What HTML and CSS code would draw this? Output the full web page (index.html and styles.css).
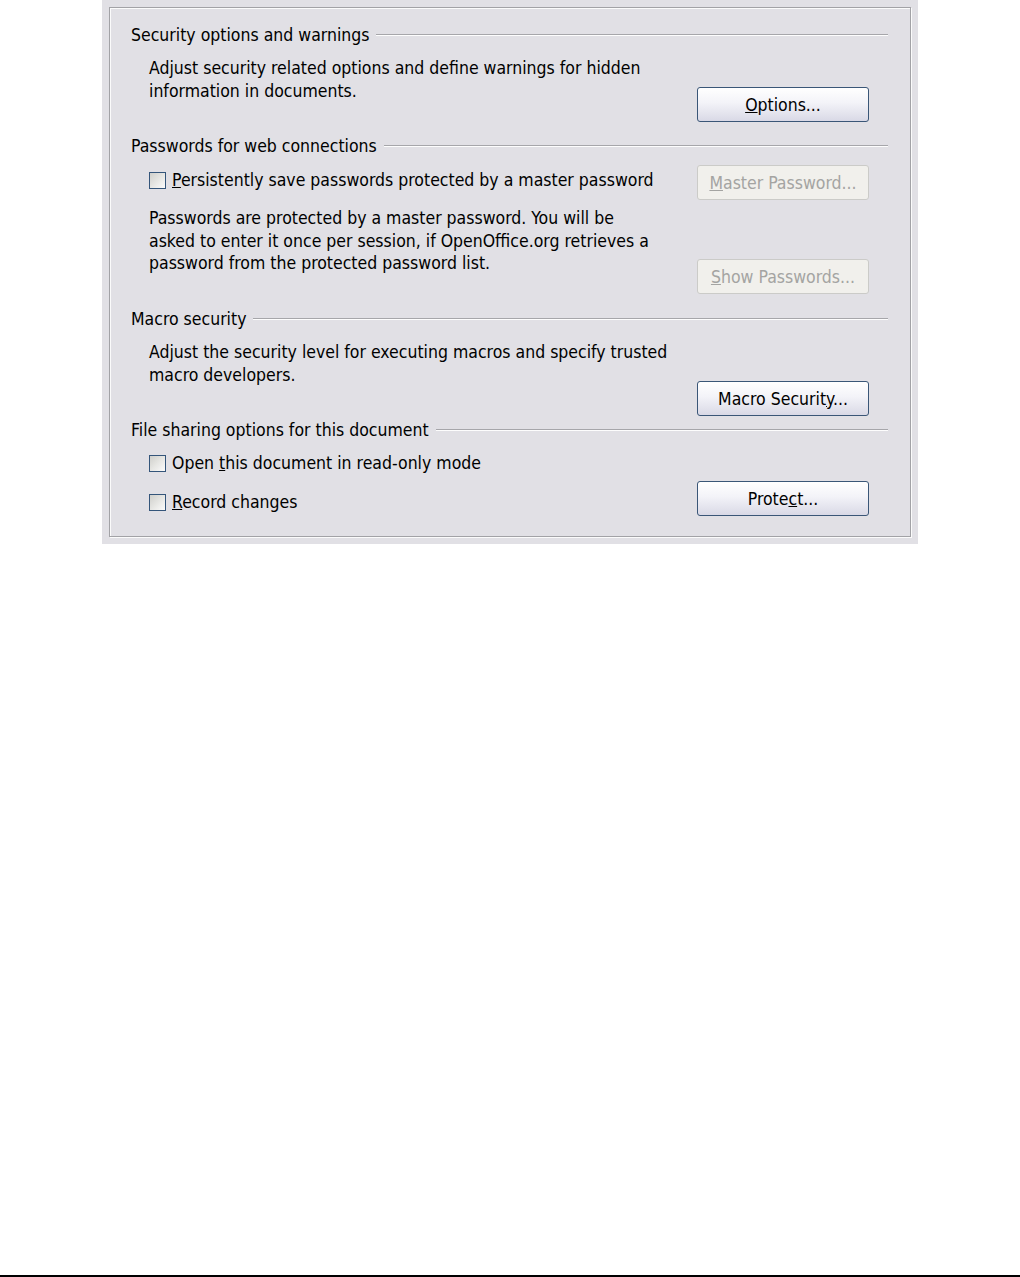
FILE: index.html
```html
<!DOCTYPE html>
<html lang="en">
<head>
  <meta charset="UTF-8">
  <meta name="viewport" content="width=device-width, initial-scale=1.0">
  <title>Security Options</title>
  <link rel="stylesheet" href="styles.css">
</head>
<body>
  <div class="panel">
    <div class="frame">

      <div class="group group-first">
        <div class="group-title"><span>Security options and warnings</span></div>
        <div class="group-body">
          <div class="group-text">
            <p class="note note-top">Adjust security related options and define warnings for hidden<br>information in documents.</p>
          </div>
          <div class="group-actions">
            <button class="btn btn-options"><u>O</u>ptions...</button>
          </div>
        </div>
      </div>

      <div class="group group-passwords">
        <div class="group-title"><span>Passwords for web connections</span></div>
        <div class="group-body">
          <div class="group-text">
            <label class="check check-first"><span class="box"></span><span><u>P</u>ersistently save passwords protected by a master password</span></label>
            <p class="note note-after-check">Passwords are protected by a master password. You will be<br>asked to enter it once per session, if OpenOffice.org retrieves a<br>password from the protected password list.</p>
          </div>
          <div class="group-actions">
            <button class="btn btn-disabled btn-master" disabled><u>M</u>aster Password...</button>
            <button class="btn btn-disabled btn-show" disabled><u>S</u>how Passwords...</button>
          </div>
        </div>
      </div>

      <div class="group group-macro">
        <div class="group-title"><span>Macro security</span></div>
        <div class="group-body">
          <div class="group-text">
            <p class="note note-top">Adjust the security level for executing macros and specify trusted<br>macro developers.</p>
          </div>
          <div class="group-actions">
            <button class="btn btn-macro">Macro Securit<u>y</u>...</button>
          </div>
        </div>
      </div>

      <div class="group group-sharing">
        <div class="group-title"><span>File sharing options for this document</span></div>
        <div class="group-body">
          <div class="group-text">
            <label class="check check-first"><span class="box"></span><span>Open <u>t</u>his document in read-only mode</span></label>
            <label class="check check-second"><span class="box"></span><span><u>R</u>ecord changes</span></label>
          </div>
          <div class="group-actions">
            <button class="btn btn-protect">Prote<u>c</u>t...</button>
          </div>
        </div>
      </div>

    </div>
  </div>

  <div class="page-rule"></div>
</body>
</html>
```

FILE: styles.css
```css
html, body {
  height: 100%;
}

body {
  margin: 0;
  background-color: white;
  font-family: "DejaVu Sans Condensed", "DejaVu Sans", sans-serif;
  font-size: 17.5px;
  color: #000;
  display: flex;
  flex-direction: column;
}

.panel {
  margin-left: 102px;
  width: 802px;
  padding: 7px;
  background-color: #e1e0e5;
}

.frame {
  border: 1px solid #a2a2a6;
  box-shadow: 1px 1px 0 #fbfbfb, inset 1px 1px 0 #fbfbfb;
  padding: 16px 22px 20px 21px;
}

.group-title {
  display: flex;
  align-items: center;
  height: 22px;
  line-height: 22px;
}

.group-title::after {
  content: "";
  flex: 1;
  margin-left: 7px;
  border-top: 1px solid #a6a6aa;
  border-bottom: 1px solid #fdfdfd;
}

.group-passwords {
  margin-top: 13px;
}

.group-macro {
  margin-top: 14px;
}

.group-sharing {
  margin-top: 3px;
}

.group-body {
  display: flex;
}

.group-text {
  flex: 1;
  padding-left: 18px;
}

.group-actions {
  width: 172px;
  margin-right: 19px;
  display: flex;
  flex-direction: column;
}

.note {
  margin: 0;
  line-height: 22.5px;
}

.note-top {
  margin-top: 11px;
}

.note-after-check {
  margin-top: 16px;
}

.check {
  display: flex;
  align-items: center;
  height: 22px;
  line-height: 22px;
}

.check-first {
  margin-top: 12px;
}

.group-sharing .check-first {
  margin-top: 11px;
}

.check-second {
  margin-top: 17px;
}

.box {
  width: 17px;
  height: 17px;
  box-sizing: border-box;
  margin-right: 6px;
  border: 1px solid #34557a;
  background: linear-gradient(135deg, #cfcfcb 0%, #e6e6e3 50%, #fbfbfb 100%);
}

.btn {
  display: block;
  width: 172px;
  height: 35px;
  padding: 0;
  border: 1px solid #3a5677;
  border-radius: 3px;
  background: linear-gradient(#ffffff 0%, #f3f3f8 45%, #d9d9e6 100%);
  font-family: inherit;
  font-size: 17.5px;
  color: #000;
  text-align: center;
}

.btn-disabled {
  border-color: #cbcbc8;
  background: #f1f0ec;
  color: #a4a4a2;
}

.btn-options {
  margin-top: 41px;
}

.btn-master {
  margin-top: 8px;
}

.btn-show {
  margin-top: 59px;
}

.btn-macro {
  margin-top: 51px;
}

.btn-protect {
  margin-top: 40px;
}

.page-rule {
  margin-top: auto;
  height: 2px;
  background-color: #000;
}
```
